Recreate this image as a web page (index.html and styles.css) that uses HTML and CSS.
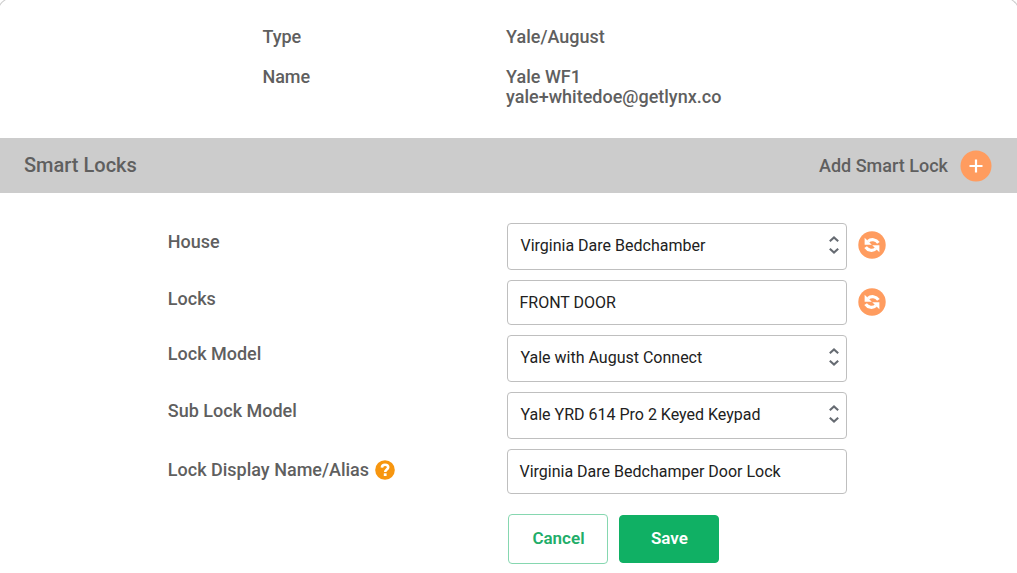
FILE: index.html
```html
<!DOCTYPE html>
<html lang="en">
<head>
    <meta charset="UTF-8">
    <meta name="viewport" content="width=device-width, initial-scale=1.0">
    <title>Smart Locks</title>
    <link rel="stylesheet" href="styles.css">
</head>
<body>

    <!-- shared icons -->
    <svg class="icon-defs" aria-hidden="true">
        <symbol id="icon-refresh" viewBox="0 0 28 28">
            <circle cx="14" cy="14" r="13.7" fill="#ff9c5f"/>
            <path d="M10 10.4C13 7.8 18 8.2 20.4 11.8" fill="none" stroke="#fff" stroke-width="3.2"/>
            <path d="M6.6 6.8v7h7.2z" fill="#fff"/>
            <path d="M18 17.6C15 20.2 10 19.8 7.6 16.2" fill="none" stroke="#fff" stroke-width="3.2"/>
            <path d="M21.4 21.2v-7h-7.2z" fill="#fff"/>
        </symbol>
        <symbol id="icon-sort" viewBox="0 0 10 20">
            <path d="M.8 6.2L5 2.4l4.2 3.8M.8 13.8L5 17.6l4.2-3.8" fill="none" stroke="#666b72" stroke-width="2.1"/>
        </symbol>
    </svg>

    <main class="card">
        <dl class="details">
            <dt>Type</dt>
            <dd>Yale/August</dd>
            <dt>Name</dt>
            <dd>Yale WF1<br>yale+whitedoe@getlynx.co</dd>
        </dl>

        <header class="section-bar">
            <h2>Smart Locks</h2>
            <button type="button" class="add-button">
                Add Smart Lock
                <svg class="add-icon" viewBox="0 0 32 32" aria-hidden="true">
                    <circle cx="16" cy="16" r="15.5" fill="#ff9c5f"/>
                    <path d="M16 9.5v13M9.5 16h13" stroke="#fff" stroke-width="2.2"/>
                </svg>
            </button>
        </header>

        <form class="lock-form">
            <div class="form-row">
                <label for="house">House</label>
                <div class="select-box">
                    <select id="house">
                        <option>Virginia Dare Bedchamber</option>
                    </select>
                    <svg class="sort-icon" aria-hidden="true"><use href="#icon-sort"/></svg>
                </div>
                <button type="button" class="refresh" aria-label="Refresh houses">
                    <svg aria-hidden="true"><use href="#icon-refresh"/></svg>
                </button>
            </div>

            <div class="form-row">
                <label for="locks">Locks</label>
                <input type="text" id="locks" value="FRONT DOOR">
                <button type="button" class="refresh" aria-label="Refresh locks">
                    <svg aria-hidden="true"><use href="#icon-refresh"/></svg>
                </button>
            </div>

            <div class="form-row">
                <label for="model">Lock Model</label>
                <div class="select-box">
                    <select id="model">
                        <option>Yale with August Connect</option>
                    </select>
                    <svg class="sort-icon" aria-hidden="true"><use href="#icon-sort"/></svg>
                </div>
            </div>

            <div class="form-row">
                <label for="submodel">Sub Lock Model</label>
                <div class="select-box">
                    <select id="submodel">
                        <option>Yale YRD 614 Pro 2 Keyed Keypad</option>
                    </select>
                    <svg class="sort-icon" aria-hidden="true"><use href="#icon-sort"/></svg>
                </div>
            </div>

            <div class="form-row">
                <label for="alias" class="with-help">
                    Lock Display Name/Alias
                    <svg class="help-icon" viewBox="0 0 20 20" aria-hidden="true">
                        <circle cx="10" cy="10" r="9.8" fill="#f7960f"/>
                        <path d="M6.9 7.6C7 5.6 8.3 4.7 10 4.7c1.9 0 3.2 1 3.2 2.6 0 2.2-3 2.2-3 4.6" fill="none" stroke="#fff" stroke-width="2.6"/>
                        <path d="M8.8 13.3h2.8V16H8.8z" fill="#fff"/>
                    </svg>
                </label>
                <input type="text" id="alias" value="Virginia Dare Bedchamper Door Lock">
            </div>

            <div class="form-row">
                <div class="actions">
                    <button type="button" class="btn btn-cancel">Cancel</button>
                    <button type="submit" class="btn btn-save">Save</button>
                </div>
            </div>
        </form>
    </main>

</body>
</html>
```

FILE: styles.css
```css
* {
    box-sizing: border-box;
}

body {
    margin: 0;
    font-family: Roboto, sans-serif;
    font-size: 18px;
    font-weight: 500;
    line-height: 20px;
    color: #5f5f5f;
    background-color: #fff;
    overflow-x: hidden;
}

button,
input,
select {
    font-family: inherit;
}

.icon-defs {
    display: none;
}

.card {
    margin: -4px -4px 0;
    padding: 0 3px;
    border: 1px solid #ccc;
    border-bottom: none;
    border-radius: 20px 20px 0 0;
}

.details {
    display: grid;
    grid-template-columns: 32.3% 1fr;
    row-gap: 20px;
    margin: 0;
    padding: 30px 0 31px 25.8%;
}

.details dd {
    margin: 0;
}

.section-bar {
    display: flex;
    justify-content: space-between;
    align-items: center;
    height: 55px;
    padding: 0 25px 0 24px;
    background-color: #ccc;
}

.section-bar h2 {
    margin: 0;
    padding-bottom: 2px;
    font-size: 20px;
    font-weight: 500;
}

.add-button {
    display: flex;
    align-items: center;
    gap: 12px;
    padding: 0;
    border: none;
    background: none;
    color: inherit;
    font-size: 18px;
    font-weight: 500;
    cursor: pointer;
}

.add-icon {
    width: 32px;
    height: 32px;
}

.lock-form {
    display: flex;
    flex-direction: column;
    gap: 10px;
    padding: 30px 0 10px;
}

.form-row {
    display: grid;
    grid-template-columns: 4fr 4fr 2fr;
    align-items: start;
    padding-left: 16.5%;
}

.form-row label {
    padding-top: 9px;
}

.form-row .with-help {
    display: flex;
    align-items: center;
    gap: 6px;
    padding-top: 11px;
}

.help-icon {
    width: 20px;
    height: 20px;
}

.select-box {
    position: relative;
}

.form-row select,
.form-row input {
    display: block;
    width: 100%;
    height: 45px;
    padding: 0 11px;
    border: 1px solid #bfbfbf;
    border-radius: 4px;
    background-color: #fff;
    color: #212121;
    font-size: 16px;
    font-weight: 400;
    appearance: none;
}

.form-row select {
    height: 47px;
    padding: 0 12px 2px;
}

.sort-icon {
    position: absolute;
    top: 12px;
    right: 8px;
    width: 10px;
    height: 20px;
    pointer-events: none;
}

.refresh {
    width: 28px;
    height: 28px;
    margin: 8px 0 0 11px;
    padding: 0;
    border: none;
    background: none;
    cursor: pointer;
}

.refresh svg {
    display: block;
    width: 28px;
    height: 28px;
}

.actions {
    grid-column: 2;
    display: flex;
    gap: 11px;
    align-items: center;
    padding: 10px 0 0 1px;
}

.btn {
    width: 100px;
    height: 50px;
    padding: 0 0 2px;
    border: 1px solid #86d7b0;
    border-radius: 4px;
    font-size: 17px;
    font-weight: 600;
    cursor: pointer;
}

.btn-cancel {
    background-color: #fff;
    color: #21ad68;
}

.btn-save {
    height: 48px;
    border-color: #10b064;
    background-color: #10b064;
    color: #fff;
}
```
